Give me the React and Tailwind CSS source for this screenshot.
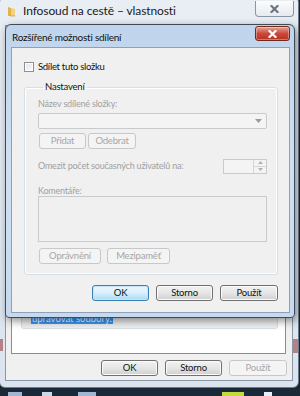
import React from 'react';

const font = { fontFamily: 'Lato, "Noto Sans", sans-serif' };

function WinButton({ children, w, disabled, primary }) {
  const base = 'h-[16px] flex items-center justify-center rounded-[3px] border text-[9.5px] leading-none tracking-[-0.2px]';
  if (disabled) {
    return <div className={`${base} ${w} border-[#c5c9cc] bg-[#f4f4f4] text-[#a6a6a6]`}>{children}</div>;
  }
  if (primary) {
    return (
      <div className={`${base} ${w} border-[#3c7fb1] bg-gradient-to-b from-[#eaf6fd] via-[#d9f0fc] to-[#a7d9f5] text-[#111] shadow-[inset_0_0_0_1px_#c5e6f8]`}>
        {children}
      </div>
    );
  }
  return (
    <div className={`${base} ${w} border-[#707070] bg-gradient-to-b from-[#f2f2f2] via-[#e6e6e6] to-[#cfcfcf] text-[#111] shadow-[inset_0_0_0_1px_#fbfbfb]`}>
      {children}
    </div>
  );
}

function Folder() {
  return (
    <svg width="9" height="11" viewBox="0 0 9 11">
      <path d="M1 1 L4 2 L4 10 L1 9 Z" fill="#e2b446" />
      <path d="M4 2 L8 3 L8 10 L4 10 Z" fill="#f3d27a" />
      <path d="M1 9 L4 10 L8 10" stroke="#b8892a" strokeWidth="0.6" fill="none" />
    </svg>
  );
}

function CloseX({ color }) {
  return (
    <svg width="9" height="8" viewBox="0 0 9 8">
      <path d="M1.5 1 L7.5 7 M7.5 1 L1.5 7" stroke={color} strokeWidth="2.2" strokeLinecap="square" />
    </svg>
  );
}

export default function App() {
  return (
    <div className="relative w-[300px] h-[396px] overflow-hidden bg-[#17222f]" style={font}>
      {/* taskbar */}
      <div className="absolute left-0 right-0 bottom-0 h-[8px] flex items-end gap-[6px] px-[8px] bg-[#1b2838]">
        <div className="w-[14px] h-[4px] bg-[#9fb7d3]" />
        <div className="ml-[14px] w-[10px] h-[4px] bg-[#cfd8e2]" />
        <div className="ml-[20px] w-[18px] h-[4px] bg-[#9fb7d3]" />
        <div className="ml-[120px] w-[22px] h-[4px] bg-[#c4d93a]" />
        <div className="ml-[14px] w-[8px] h-[4px] bg-[#e8eef4]" />
      </div>

      {/* outer window (properties) */}
      <div className="absolute left-[-1px] top-[-4px] w-[300px] h-[392px] rounded-[6px] border border-[#6b7a8a] bg-gradient-to-b from-[#e9eef4] to-[#dbe4ee] flex flex-col">
        <div className="absolute left-0 top-[342px] w-[3px] h-[12px] bg-[#8e1c20]/50" />
        <div className="absolute right-0 top-[342px] w-[5px] h-[14px] bg-[#8e1c20]/50" />
        <div className="h-[28px] flex items-start pt-[9px] pl-[7px]">
          <Folder />
          <span className="ml-[7px] text-[12px] leading-[12px] tracking-[-0.1px] text-[#1a1a1a] -mt-[1px]">Infosoud na cestě – vlastnosti</span>
          <div className="ml-auto mr-[4px] -mt-[5px] w-[39px] h-[16px] rounded-b-[4px] border border-t-0 border-[#8b96a3] bg-gradient-to-b from-[#fbfcfd] to-[#e6ebf0] flex items-center justify-center">
            <CloseX color="#6d7680" />
          </div>
        </div>
        <div className="ml-[5px] mr-[5px] mb-[6px] flex-1 border border-[#8a97a5] bg-[#f0f0f0] flex flex-col">
          <div className="mt-[240px] ml-[5px] mr-[6px] h-[88px] border border-[#898c95] bg-white flex flex-col">
            <div className="mt-[26px] ml-[9px] mr-[7px] h-[36px] rounded-[3px] border border-[#d5dfe5] bg-[#f0f0f0] flex flex-col justify-end pb-[4px] pl-[9px]">
              <span className="text-[9.5px] leading-[10px] text-white bg-[#3399ff] self-start px-[1px]">upravovat soubory.</span>
            </div>
          </div>
          <div className="mt-[6px] flex justify-end gap-[7px] pr-[5px]">
            <WinButton w="w-[57px]">OK</WinButton>
            <WinButton w="w-[57px]">Storno</WinButton>
            <WinButton w="w-[58px]" disabled>Použít</WinButton>
          </div>
        </div>
      </div>

      {/* inner dialog */}
      <div className="absolute left-[5px] top-[24px] w-[290px] h-[294px] rounded-t-[6px] rounded-b-[4px] border border-[#3d4a58] bg-gradient-to-b from-[#bfd5ec] via-[#cfe0f2] to-[#c6d9ee] shadow-[2px_3px_8px_rgba(0,0,0,0.45)] flex flex-col">
        <div className="h-[22px] flex items-start">
          <span className="ml-[6px] mt-[6px] text-[10px] leading-[12px] tracking-[-0.25px] text-[#111]">Rozšířené možnosti sdílení</span>
          <div className="ml-auto mr-[4px] mt-[1px] w-[35px] h-[15px] rounded-[3px] border border-[#6e2a22] bg-gradient-to-b from-[#e8a194] via-[#c9493a] to-[#b8301f] flex items-center justify-center shadow-[inset_0_0_0_1px_rgba(255,255,255,0.35)]">
            <CloseX color="#ffffff" />
          </div>
        </div>
        <div className="ml-[5px] mr-[4px] mb-[4px] flex-1 border border-[#8da2b8] bg-[#f0f0f0] flex flex-col pl-[12px] pr-[11px]">
          <div className="mt-[14px] flex items-center">
            <div className="w-[10px] h-[10px] border border-[#8e8f8f] bg-gradient-to-br from-[#dfe6ee] to-[#f7f9fb] shadow-[inset_0_0_0_1px_#fff]" />
            <span className="ml-[4px] text-[9.5px] leading-[10px] tracking-[-0.3px] text-[#111]">Sdílet tuto složku</span>
          </div>

          <fieldset className="mt-[9px] rounded-[3px] border border-[#d5dfe5] shadow-[inset_0_0_0_1px_#fff] pl-[13px] pr-[10px] pb-[10px]">
            <legend className="ml-[5px] px-[2px] text-[9.5px] leading-[12px] tracking-[-0.2px] text-[#111]">Nastavení</legend>
            <div className="mt-[5px] text-[9px] leading-[12px] tracking-[-0.2px] text-[#a0a0a0]">Název sdílené složky:</div>
            <div className="mt-[3px] h-[16px] rounded-[2px] border border-[#c7cbce] bg-[#f4f4f4] flex items-center justify-end pr-[4px]">
              <svg width="7" height="4" viewBox="0 0 7 4"><path d="M0 0 L7 0 L3.5 4 Z" fill="#9a9a9a" /></svg>
            </div>
            <div className="mt-[4px] flex gap-[2px] pl-[1px]">
              <WinButton w="w-[47px]" disabled>Přidat</WinButton>
              <WinButton w="w-[48px]" disabled>Odebrat</WinButton>
            </div>
            <div className="mt-[9px] h-[16px] flex items-center">
              <span className="text-[9px] leading-[12px] tracking-[-0.2px] text-[#a0a0a0]">Omezit počet současných uživatelů na:</span>
              <div className="ml-auto w-[44px] h-[15px] border border-[#c7cbce] bg-[#f4f4f4] flex justify-end">
                <div className="w-[13px] flex flex-col border-l border-[#d4d7da]">
                  <div className="flex-1 flex items-center justify-center border-b border-[#d4d7da]">
                    <svg width="5" height="3" viewBox="0 0 5 3"><path d="M0 3 L5 3 L2.5 0 Z" fill="#b0b0b0" /></svg>
                  </div>
                  <div className="flex-1 flex items-center justify-center">
                    <svg width="5" height="3" viewBox="0 0 5 3"><path d="M0 0 L5 0 L2.5 3 Z" fill="#b0b0b0" /></svg>
                  </div>
                </div>
              </div>
            </div>
            <div className="mt-[11px] text-[9px] leading-[11px] tracking-[-0.2px] text-[#a0a0a0]">Komentáře:</div>
            <div className="h-[46px] border border-[#c7cbce] bg-[#f0f0f0]" />
            <div className="mt-[6px] flex gap-[6px] pl-[1px]">
              <WinButton w="w-[62px]" disabled>Oprávnění</WinButton>
              <WinButton w="w-[63px]" disabled>Mezipaměť</WinButton>
            </div>
          </fieldset>

          <div className="mt-[10px] flex justify-end gap-[7px]">
            <WinButton w="w-[57px]" primary>OK</WinButton>
            <WinButton w="w-[57px]">Storno</WinButton>
            <WinButton w="w-[58px]">Použít</WinButton>
          </div>
        </div>
      </div>
    </div>
  );
}
